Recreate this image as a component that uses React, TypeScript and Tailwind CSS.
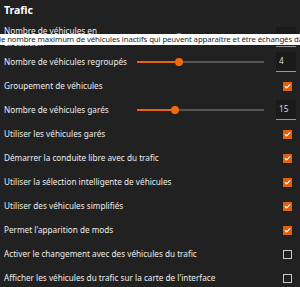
import { Check } from 'lucide-react'

type Row =
  | { kind: 'slider'; label: string; value: number; pct: number }
  | { kind: 'check'; label: string; checked: boolean }

const rows: Row[] = [
  { kind: 'slider', label: 'Nombre de véhicules en circulation', value: 30, pct: 33 },
  { kind: 'slider', label: 'Nombre de véhicules regroupés', value: 4, pct: 33 },
  { kind: 'check', label: 'Groupement de véhicules', checked: true },
  { kind: 'slider', label: 'Nombre de véhicules garés', value: 15, pct: 30 },
  { kind: 'check', label: 'Utiliser les véhicules garés', checked: true },
  { kind: 'check', label: 'Démarrer la conduite libre avec du trafic', checked: true },
  { kind: 'check', label: 'Utiliser la sélection intelligente de véhicules', checked: true },
  { kind: 'check', label: 'Utiliser des véhicules simplifiés', checked: true },
  { kind: 'check', label: "Permet l'apparition de mods", checked: true },
  { kind: 'check', label: 'Activer le changement avec des véhicules du trafic', checked: false },
  { kind: 'check', label: "Afficher les véhicules du trafic sur la carte de l'interface", checked: false },
]

function Slider({ pct }: { pct: number }) {
  return (
    <div className="relative w-[127px] h-[2px] bg-[#555555]">
      <div className="h-full bg-[#e8640f]" style={{ width: `${pct}%` }} />
      <div
        className="absolute top-1/2 w-[8px] h-[8px] -mt-[4px] -ml-[4px] rounded-full bg-[#f06a0c]"
        style={{ left: `${pct}%` }}
      />
    </div>
  )
}

function CheckBox({ checked }: { checked: boolean }) {
  if (checked) {
    return (
      <div className="w-[9px] h-[9px] bg-[#e0600e] flex items-center justify-center">
        <Check className="w-[7px] h-[7px] text-white" strokeWidth={4} />
      </div>
    )
  }
  return <div className="w-[9px] h-[9px] border border-[#c8c8c8]" />
}

export default function App() {
  return (
    <div
      className="relative w-[300px] h-[287px] overflow-hidden bg-[#212121] text-[#ececec]"
      style={{ fontFamily: '"Noto Sans", "Open Sans", sans-serif' }}
    >
      <div className="h-[24px] pl-[4px] pt-[3px] text-[10.5px] font-bold leading-[14px] text-white">Trafic</div>

      <div className="flex flex-col">
        {rows.map((row, i) =>
          row.kind === 'slider' ? (
            <div
              key={row.label}
              className={`${i === 0 ? 'h-[26px]' : 'h-[24px]'} flex items-center pl-[4px] pr-[4px]`}
            >
              <div className="w-[133px] text-[8.2px] leading-[12px]">{row.label}</div>
              <Slider pct={row.pct} />
              <div
                className={`ml-auto w-[20px] h-[20px] bg-[#1a1a1a] border-b border-[#9a9a9a] flex items-center pl-[3px] text-[8.2px] text-[#dddddd] ${i === 0 ? 'pt-[4px]' : ''}`}
              >
                {row.value}
              </div>
            </div>
          ) : (
            <div key={row.label} className="h-[24px] flex items-center justify-between pl-[4px] pr-[8px]">
              <div className="text-[8.2px] leading-[12px] whitespace-nowrap">{row.label}</div>
              <CheckBox checked={row.checked} />
            </div>
          ),
        )}
      </div>

      {/* tooltip */}
      <div className="absolute left-[-2px] top-[34px] h-[11px] w-[310px] bg-white text-[#1e1e1e] text-[7.8px] leading-[11px] whitespace-nowrap pl-[1px] tracking-[-0.1px]">
        le nombre maximum de véhicules inactifs qui peuvent apparaître et être échangés dans le monde
      </div>
    </div>
  )
}
